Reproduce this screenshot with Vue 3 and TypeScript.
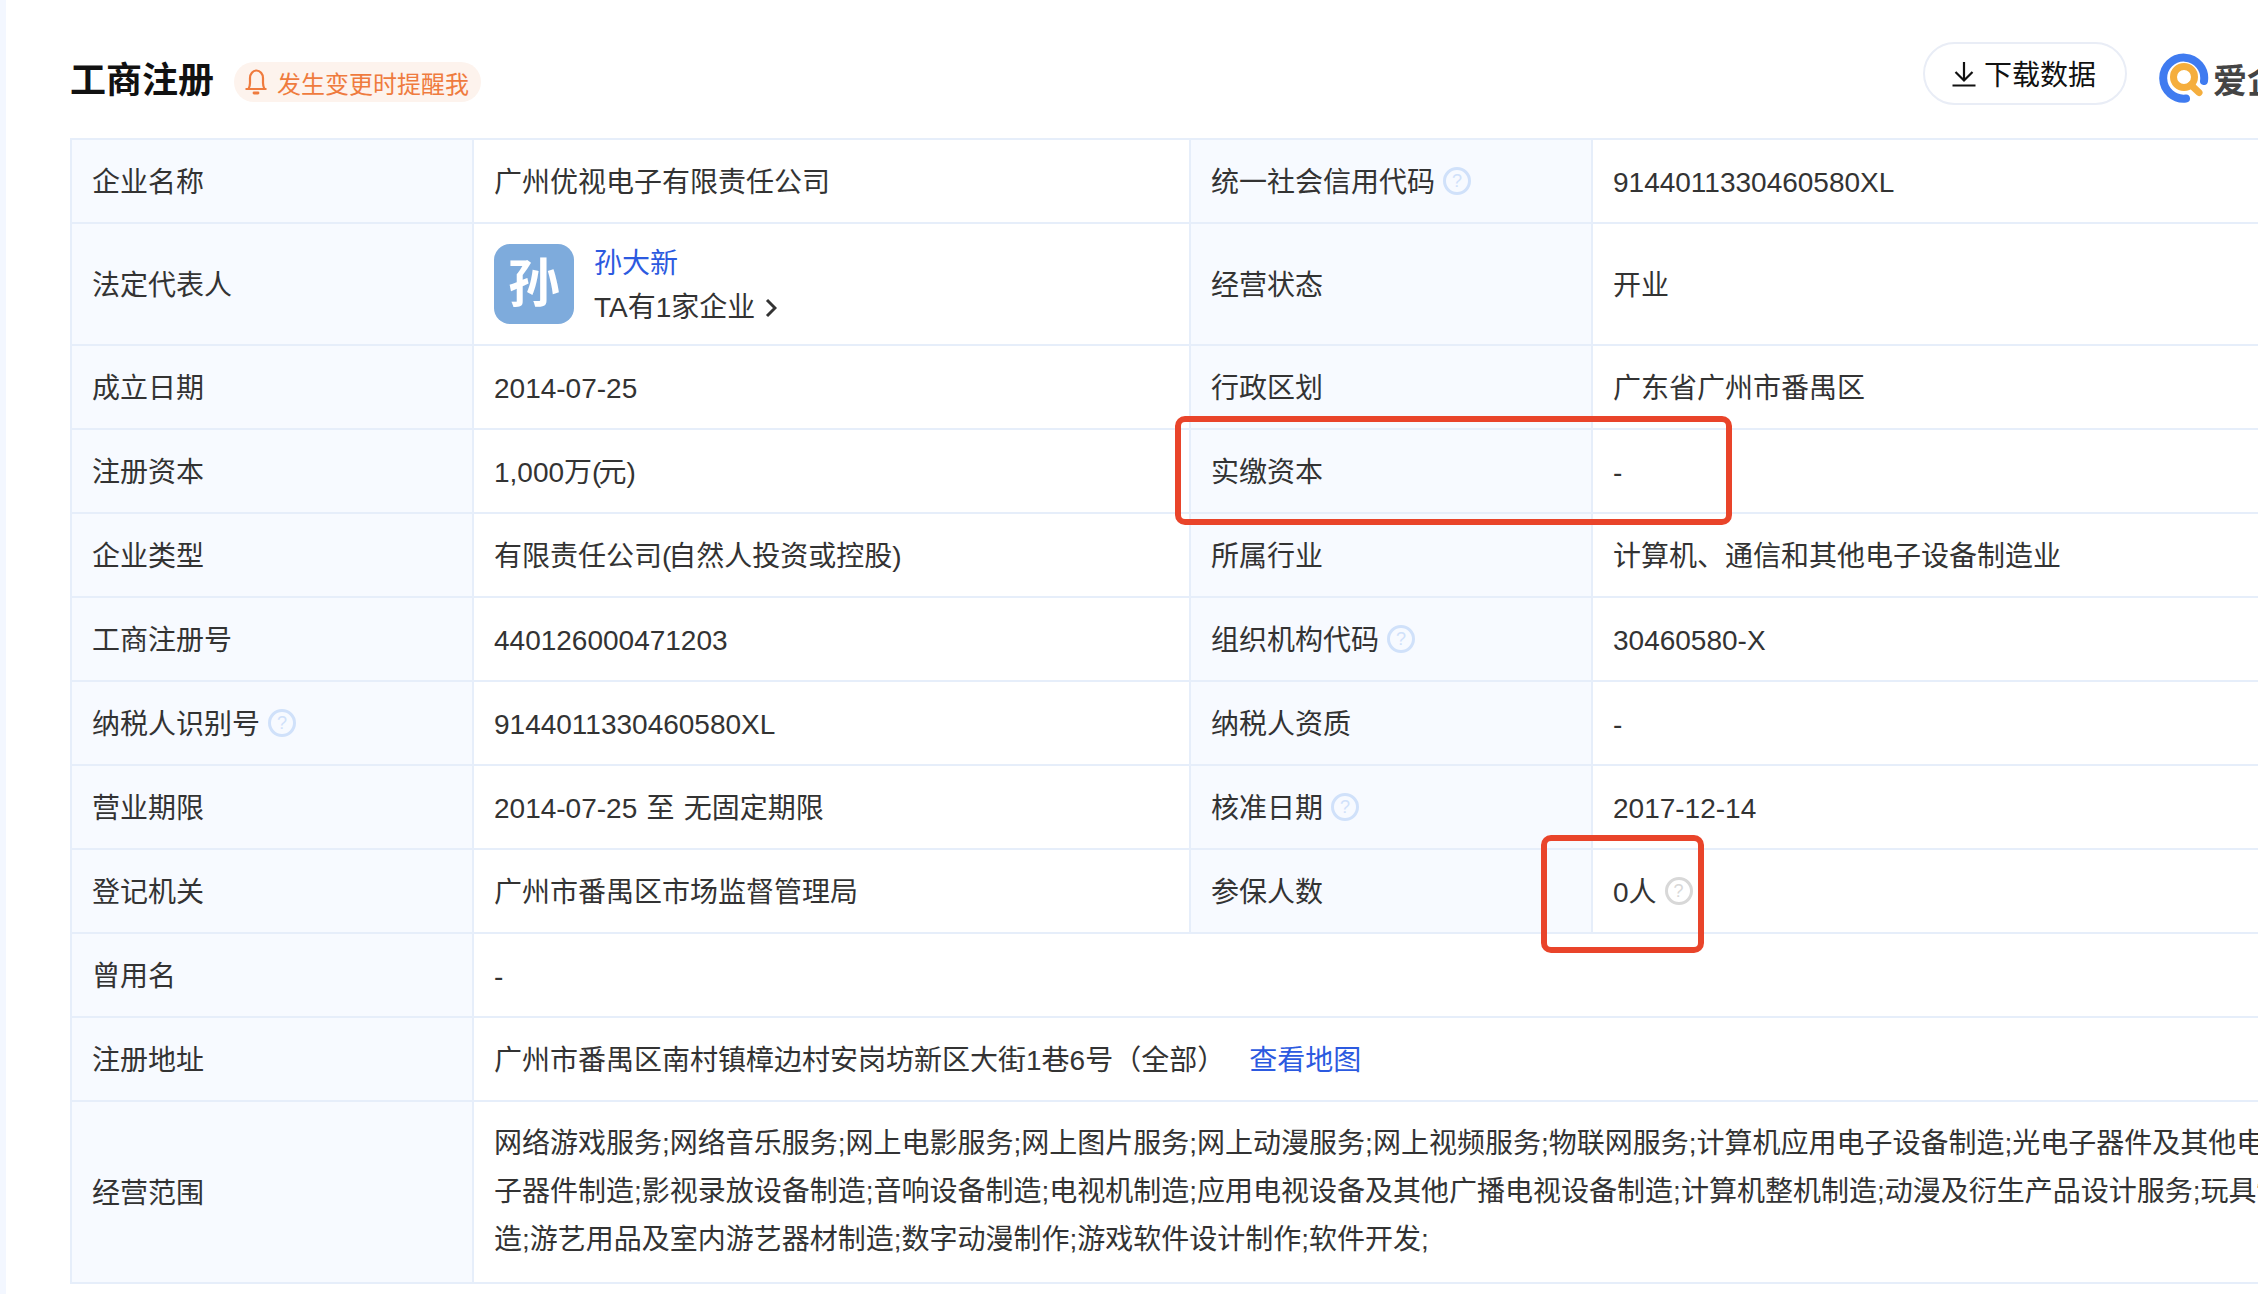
<script setup lang="ts">
const scopeLines: string[] = [
  '网络游戏服务;网络音乐服务;网上电影服务;网上图片服务;网上动漫服务;网上视频服务;物联网服务;计算机应用电子设备制造;光电子器件及其他电',
  '子器件制造;影视录放设备制造;音响设备制造;电视机制造;应用电视设备及其他广播电视设备制造;计算机整机制造;动漫及衍生产品设计服务;玩具制',
  '造;游艺用品及室内游艺器材制造;数字动漫制作;游戏软件设计制作;软件开发;'
]
</script>

<template>
  <div class="page">
    <div class="stripe"></div>
    <main class="content">
      <header class="head">
        <div class="title-wrap">
          <h2 class="title">工商注册</h2>
          <span class="remind">
            <svg class="bell" viewBox="0 0 24 26" width="24" height="26" fill="none" stroke="#ef7b3e" stroke-width="2.2">
              <path d="M1.5 20h21M4.5 20c1-2 1.5-3.5 1.500-6V9a6.500 7.500 0 0 1 13 0v5c0 2.500.5 4 1.500 6" stroke-linejoin="round" />
              <path d="M10 24h4" stroke-linecap="round" stroke-width="2.8" />
            </svg>
            发生变更时提醒我
          </span>
        </div>
        <div class="actions">
          <button class="download" type="button">
            <svg viewBox="0 0 24 26" width="24" height="26" fill="none" stroke="#111" stroke-width="2.2">
              <path d="M12 1v18M3.500 11l8.500 8.500 8.500-8.500M0.500 24.500h23" />
            </svg>
            <span class="download-text">下载数据</span>
          </button>
          <div class="brand">
            <svg viewBox="0 0 50 50" width="50" height="50" fill="none">
              <path d="M45 28A20.500 20.500 0 1 0 27 45.500" stroke="#3f7bf0" stroke-width="8" stroke-linecap="round" />
              <circle cx="25" cy="24" r="10.500" stroke="#f5ae3d" stroke-width="7" />
              <path d="M32 32l8 7.500" stroke="#f5ae3d" stroke-width="7" stroke-linecap="round" />
            </svg>
            <span class="brand-name">爱企查</span>
          </div>
        </div>
      </header>

      <table class="info">
        <colgroup>
          <col class="c1" /><col class="c2" /><col class="c3" /><col class="c4" />
        </colgroup>
        <tbody>
          <tr class="row">
            <th>企业名称</th><td>广州优视电子有限责任公司</td>
            <th>统一社会信用代码<span class="help">?</span></th><td>9144011330460580XL</td>
          </tr>
          <tr class="row-person">
            <th>法定代表人</th>
            <td class="person-cell">
              <div class="person">
                <span class="avatar">孙</span>
                <div class="person-text">
                  <a class="link">孙大新</a>
                  <span class="companies">TA有1家企业
                    <svg viewBox="0 0 12 20" width="12" height="20" fill="none" stroke="#333" stroke-width="3"><path d="M2 2l8 8-8 8" /></svg>
                  </span>
                </div>
              </div>
            </td>
            <th>经营状态</th><td>开业</td>
          </tr>
          <tr class="row">
            <th>成立日期</th><td>2014-07-25</td>
            <th>行政区划</th><td>广东省广州市番禺区</td>
          </tr>
          <tr class="row">
            <th>注册资本</th><td>1,000万<span class="paren">(</span>元<span class="paren">)</span></td>
            <th>实缴资本</th><td>-</td>
          </tr>
          <tr class="row">
            <th>企业类型</th><td>有限责任公司<span class="paren">(</span>自然人投资或控股<span class="paren">)</span></td>
            <th>所属行业</th><td>计算机、通信和其他电子设备制造业</td>
          </tr>
          <tr class="row">
            <th>工商注册号</th><td>440126000471203</td>
            <th>组织机构代码<span class="help">?</span></th><td>30460580-X</td>
          </tr>
          <tr class="row">
            <th>纳税人识别号<span class="help">?</span></th><td>9144011330460580XL</td>
            <th>纳税人资质</th><td>-</td>
          </tr>
          <tr class="row">
            <th>营业期限</th><td class="spaced">2014-07-25 至 无固定期限</td>
            <th>核准日期<span class="help">?</span></th><td>2017-12-14</td>
          </tr>
          <tr class="row">
            <th>登记机关</th><td>广州市番禺区市场监督管理局</td>
            <th>参保人数</th><td>0人<span class="help grey">?</span></td>
          </tr>
          <tr class="row">
            <th>曾用名</th><td colspan="3">-</td>
          </tr>
          <tr class="row">
            <th>注册地址</th>
            <td colspan="3">广州市番禺区南村镇樟边村安岗坊新区大街1巷6号（全部）<a class="link map">查看地图</a></td>
          </tr>
          <tr class="row-scope">
            <th>经营范围</th>
            <td colspan="3" class="scope">
              <span v-for="line in scopeLines" :key="line" class="scope-line">{{ line }}</span>
            </td>
          </tr>
        </tbody>
      </table>
    </main>
    <div class="mark mark-capital"></div>
    <div class="mark mark-insured"></div>
  </div>
</template>

<style>
html, body {
  margin: 0;
  overflow: hidden;
  background: #fff;
}
</style>

<style scoped>
.page {
  position: relative;
  width: 2258px;
  height: 1294px;
  overflow: hidden;
  display: flex;
  font-family: "Liberation Sans", "Noto Sans CJK SC", sans-serif;
  font-size: 28px;
  color: #333;
}
.stripe {
  width: 6px;
  flex: none;
  background: #f3f7ff;
}
.content {
  flex: none;
  margin-left: 64px;
  width: 2290px;
}
.head {
  height: 138px;
  display: flex;
  justify-content: space-between;
  box-sizing: border-box;
  padding-top: 42px;
}
.title-wrap {
  display: flex;
  align-items: flex-start;
  gap: 20px;
  padding-top: 20px;
}
.title {
  margin: -1px 0 0;
  font-size: 36px;
  line-height: 40px;
  font-weight: 700;
  color: #111;
}
.remind {
  height: 40px;
  padding: 0 12px 0 10px;
  display: flex;
  align-items: center;
  gap: 9px;
  border-radius: 20px;
  background: #fdf3ed;
  color: #ef7b3e;
  font-size: 24px;
  white-space: nowrap;
}
.actions {
  display: flex;
  align-items: flex-start;
  gap: 32px;
  width: 367px;
  flex: none;
  margin-right: 70px;
}
.download {
  flex: none;
  width: 204px;
  height: 63px;
  box-sizing: border-box;
  border: 2px solid #e9edf6;
  border-radius: 32px;
  background: #fff;
  color: #111;
  font: inherit;
  display: flex;
  align-items: center;
  justify-content: center;
  gap: 8px;
  padding: 0 2px 0 0;
}
.download-text {
  margin-top: -2px;
}
.brand {
  display: flex;
  align-items: center;
  gap: 4px;
  height: 60px;
  margin-top: 6px;
  white-space: nowrap;
}
.brand-name {
  font-size: 34px;
  font-weight: 700;
  color: #444;
}
.info {
  table-layout: fixed;
  border-collapse: collapse;
  width: 2290px;
  border: 2px solid #e6eefa;
}
.c1 { width: 402px; }
.c2 { width: 717px; }
.c3 { width: 402px; }
.info th,
.info td {
  border: 2px solid #e6eefa;
  padding: 3px 20px 0;
  text-align: left;
  font-weight: 400;
  line-height: 40px;
  white-space: nowrap;
  vertical-align: middle;
}
.info th {
  background: #f7faff;
}
.row { height: 84px; }
.row-person { height: 122px; }
.row-scope { height: 182px; }
.help {
  display: inline-block;
  box-sizing: border-box;
  width: 28px;
  height: 28px;
  margin: 4px 0 0 8px;
  border: 3px solid #d0e1fa;
  border-radius: 50%;
  color: #d0e1fa;
  font-size: 18px;
  line-height: 22px;
  text-align: center;
  vertical-align: top;
}
.help.grey {
  border-color: #d8d8d8;
  color: #d8d8d8;
}
.paren {
  letter-spacing: -3px;
}
.spaced {
  word-spacing: 1.500px;
}
.info td.person-cell,
.info td.scope {
  padding-top: 0;
}
.person {
  display: flex;
  align-items: center;
  gap: 20px;
}
.avatar {
  width: 80px;
  height: 80px;
  flex: none;
  border-radius: 16px;
  background: #7eabdc;
  color: #fff;
  font-size: 52px;
  font-weight: 700;
  line-height: 80px;
  text-align: center;
}
.person-text {
  display: flex;
  flex-direction: column;
  gap: 4px;
  padding-top: 3px;
  line-height: 40px;
}
.companies {
  display: flex;
  align-items: center;
  gap: 10px;
}
.link {
  color: #2c5ae0;
}
.map {
  margin-left: 24px;
}
.info td.scope {
  line-height: 48px;
}
.scope-line {
  display: block;
}
.mark {
  position: absolute;
  box-sizing: border-box;
  border: 6px solid #e9442a;
  border-radius: 10px;
}
.mark-capital {
  left: 1175px;
  top: 416px;
  width: 557px;
  height: 109px;
}
.mark-insured {
  left: 1541px;
  top: 835px;
  width: 163px;
  height: 118px;
}
</style>
